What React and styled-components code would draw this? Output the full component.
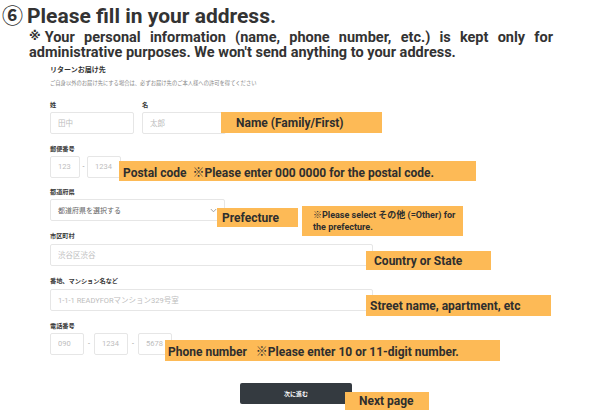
import React from "react";
import styled, { createGlobalStyle } from "styled-components";

const GlobalStyle = createGlobalStyle`
  html, body {
    margin: 0;
    padding: 0;
    background: #fff;
  }
  body {
    font-family: Roboto, "Noto Sans CJK JP", sans-serif;
    color: #333;
  }
`;

const Page = styled.div`
  position: relative;
  width: 600px;
  height: 414px;
  overflow: hidden;
`;

const Header = styled.div`
  padding: 1px 0 0 2px;
`;

const Title = styled.h1`
  margin: 0;
  font-size: 21px;
  line-height: 27px;
  font-weight: 700;
  color: #333;
  .num {
    font-family: "Noto Sans CJK JP", sans-serif;
    font-weight: 700;
    margin-right: 4px;
  }
`;

const Notice = styled.p`
  margin: 0 0 0 27px;
  width: 524px;
  font-size: 14.5px;
  line-height: 15px;
  font-weight: 700;
  text-align: justify;
  color: #333;
  .mark {
    display: inline-block;
    position: relative;
    top: -2px;
    margin-right: 4px;
    font-size: 12px;
    line-height: 1;
    font-family: "DejaVu Sans", "Noto Sans CJK JP", sans-serif;
  }
`;

const Form = styled.div`
  margin: 4px 0 0 50px;
  width: 323px;
`;

const FormTitle = styled.div`
  font-family: "Noto Sans CJK JP", sans-serif;
  font-size: 7px;
  line-height: 10px;
  font-weight: 700;
  color: #333;
`;

const FormLead = styled.div`
  margin-top: 5px;
  font-family: "Noto Sans CJK JP", sans-serif;
  font-size: 5.3px;
  line-height: 8px;
  color: #888;
`;

const Field = styled.div`
  margin-top: ${(p) => p.$top || 9.5}px;
`;

const Row = styled.div`
  display: flex;
  align-items: flex-end;
  gap: ${(p) => p.$gap || 0}px;
`;

const Col = styled.div`
  display: flex;
  flex-direction: column;
`;

const Label = styled.div`
  font-family: "Noto Sans CJK JP", sans-serif;
  font-size: 6.2px;
  line-height: 9px;
  font-weight: 700;
  color: #3a3a3a;
  margin-bottom: 3px;
`;

const Input = styled.input`
  box-sizing: border-box;
  width: ${(p) => p.$w}px;
  height: 22px;
  margin: 0;
  padding: 0 0 0 7px;
  border: 1px solid #e6e6e6;
  border-radius: 2px;
  background: #fff;
  font-family: Roboto, "Noto Sans CJK JP", sans-serif;
  font-size: 7.5px;
  outline: none;
  &::placeholder {
    color: #bdbdbd;
  }
`;

const Dash = styled.span`
  width: ${(p) => p.$w || 8}px;
  height: 22px;
  display: flex;
  align-items: center;
  justify-content: center;
  font-size: 7px;
  color: #999;
`;

const Select = styled.div`
  box-sizing: border-box;
  width: 175px;
  height: 22px;
  padding: 0 7px;
  border: 1px solid #e6e6e6;
  border-radius: 2px;
  display: flex;
  align-items: center;
  justify-content: space-between;
  font-family: "Noto Sans CJK JP", sans-serif;
  font-size: 7px;
  color: #666;
`;

const ButtonRow = styled.div`
  margin-top: 28px;
  width: 592px;
  display: flex;
  justify-content: center;
`;

const NextButton = styled.button`
  width: 112px;
  height: 21px;
  border: none;
  border-radius: 2px;
  background: #343a40;
  color: #fff;
  font-family: "Noto Sans CJK JP", sans-serif;
  font-size: 6px;
  font-weight: 700;
  padding: 0;
`;

const Tag = styled.div`
  position: absolute;
  left: ${(p) => p.$x}px;
  top: ${(p) => p.$y}px;
  width: ${(p) => p.$w}px;
  height: ${(p) => p.$h}px;
  box-sizing: border-box;
  padding-left: ${(p) => p.$pl}px;
  display: flex;
  align-items: center;
  background: #fdba56;
  font-family: Roboto, "Noto Sans CJK JP", sans-serif;
  font-size: 12px;
  font-weight: 700;
  color: #2e2e2e;
  white-space: pre;
`;

const NoteTag = styled.div`
  position: absolute;
  left: 302px;
  top: 206px;
  width: 161px;
  height: 30px;
  box-sizing: border-box;
  padding: 3px 6px 0 11px;
  background: #fdba56;
  font-family: Roboto, "Noto Sans CJK JP", sans-serif;
  font-size: 9px;
  line-height: 12px;
  font-weight: 700;
  color: #2e2e2e;
`;

const Chevron = () => (
  <svg width="7" height="5" viewBox="0 0 7 5">
    <path d="M0.8 1 L3.5 3.8 L6.2 1" fill="none" stroke="#999" strokeWidth="0.9" />
  </svg>
);

export default function App() {
  return (
    <Page>
      <GlobalStyle />
      <Header>
        <Title>
          <span className="num">⑥</span>Please fill in your address.
        </Title>
        <Notice>
          <span className="mark">※</span>Your personal information (name, phone
          number, etc.) is kept only for administrative purposes. We won't send
          anything to your address.
        </Notice>
      </Header>

      <Form>
        <FormTitle>リターンお届け先</FormTitle>
        <FormLead>
          ご自身以外のお届け先にする場合は、必ずお届け先のご本人様への許可を得てください
        </FormLead>

        <Field $top={13}>
          <Row $gap={8}>
            <Col>
              <Label>姓</Label>
              <Input $w={84} placeholder="田中" />
            </Col>
            <Col>
              <Label>名</Label>
              <Input $w={84} placeholder="太郎" />
            </Col>
          </Row>
        </Field>

        <Field>
          <Label>郵便番号</Label>
          <Row>
            <Input $w={30} placeholder="123" />
            <Dash $w={7}>-</Dash>
            <Input $w={34} placeholder="1234" />
          </Row>
        </Field>

        <Field>
          <Label>都道府県</Label>
          <Select>
            <span>都道府県を選択する</span>
            <Chevron />
          </Select>
        </Field>

        <Field>
          <Label>市区町村</Label>
          <Input $w={323} placeholder="渋谷区渋谷" />
        </Field>

        <Field>
          <Label>番地、マンション名など</Label>
          <Input $w={323} placeholder="1-1-1 READYFORマンション329号室" />
        </Field>

        <Field>
          <Label>電話番号</Label>
          <Row>
            <Input $w={34} placeholder="090" />
            <Dash $w={10}>-</Dash>
            <Input $w={34} placeholder="1234" />
            <Dash $w={10}>-</Dash>
            <Input $w={34} placeholder="5678" />
          </Row>
        </Field>
      </Form>

      <ButtonRow>
        <NextButton>次に進む</NextButton>
      </ButtonRow>

      <Tag $x={221} $y={112} $w={161} $h={21} $pl={15}>Name (Family/First)</Tag>
      <Tag $x={119} $y={161} $w={357} $h={20} $pl={4}>
        {"Postal code  ※Please enter 000 0000 for the postal code."}
      </Tag>
      <Tag $x={217} $y={208} $w={81} $h={19} $pl={5}>Prefecture</Tag>
      <NoteTag>
        ※Please select その他 (=Other) for the prefecture.
      </NoteTag>
      <Tag $x={366} $y={251} $w={125} $h={19} $pl={8}>Country or State</Tag>
      <Tag $x={366} $y={295} $w={185} $h={21} $pl={4}>Street name, apartment, etc</Tag>
      <Tag $x={165} $y={340} $w={335} $h={21} $pl={3}>
        {"Phone number   ※Please enter 10 or 11-digit number."}
      </Tag>
      <Tag $x={345} $y={392} $w={84} $h={18} $pl={14}>Next page</Tag>
    </Page>
  );
}
